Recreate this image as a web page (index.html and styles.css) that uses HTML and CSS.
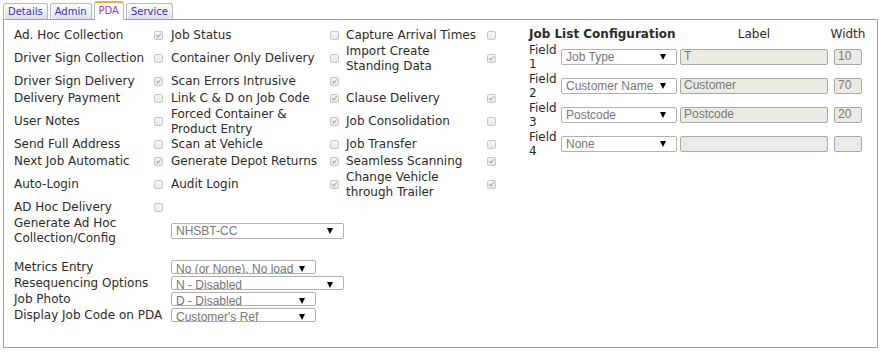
FILE: index.html
```html
<!DOCTYPE html>
<html lang="en">
<head>
    <meta charset="UTF-8">
    <title>PDA Settings</title>
    <link rel="stylesheet" href="styles.css">
</head>
<body>
    <div class="tabs">
        <a class="tab">Details</a>
        <a class="tab">Admin</a>
        <a class="tab active">PDA</a>
        <a class="tab">Service</a>
    </div>
    <div class="panel">
        <div class="left">
            <div class="opts">
                <span class="lbl">Ad. Hoc Collection</span><span class="cb on"></span>
                <span class="lbl">Job Status</span><span class="cb"></span>
                <span class="lbl">Capture Arrival Times</span><span class="cb"></span>

                <span class="lbl">Driver Sign Collection</span><span class="cb"></span>
                <span class="lbl">Container Only Delivery</span><span class="cb"></span>
                <span class="lbl">Import Create<br>Standing Data</span><span class="cb on"></span>

                <span class="lbl">Driver Sign Delivery</span><span class="cb on"></span>
                <span class="lbl">Scan Errors Intrusive</span><span class="cb on"></span>
                <span></span><span></span>

                <span class="lbl">Delivery Payment</span><span class="cb"></span>
                <span class="lbl">Link C &amp; D on Job Code</span><span class="cb on"></span>
                <span class="lbl">Clause Delivery</span><span class="cb on"></span>

                <span class="lbl">User Notes</span><span class="cb"></span>
                <span class="lbl">Forced Container &amp;<br>Product Entry</span><span class="cb on"></span>
                <span class="lbl">Job Consolidation</span><span class="cb"></span>

                <span class="lbl">Send Full Address</span><span class="cb"></span>
                <span class="lbl">Scan at Vehicle</span><span class="cb"></span>
                <span class="lbl">Job Transfer</span><span class="cb"></span>

                <span class="lbl">Next Job Automatic</span><span class="cb on"></span>
                <span class="lbl">Generate Depot Returns</span><span class="cb on"></span>
                <span class="lbl">Seamless Scanning</span><span class="cb on"></span>

                <span class="lbl">Auto-Login</span><span class="cb"></span>
                <span class="lbl">Audit Login</span><span class="cb on"></span>
                <span class="lbl">Change Vehicle<br>through Trailer</span><span class="cb on"></span>

                <span class="lbl">AD Hoc Delivery</span><span class="cb"></span>
                <span></span><span></span><span></span><span></span>

                <span class="lbl">Generate Ad Hoc<br>Collection/Config</span><span></span>
                <div class="sel wide"><span>NHSBT-CC</span><i class="arrow"></i></div>
            </div>

            <div class="extras">
                <span class="lbl">Metrics Entry</span>
                <div class="sel small"><span>No (or None), No load</span><i class="arrow"></i></div>
                <span class="lbl">Resequencing Options</span>
                <div class="sel small long"><span>N - Disabled</span><i class="arrow"></i></div>
                <span class="lbl">Job Photo</span>
                <div class="sel small"><span>D - Disabled</span><i class="arrow"></i></div>
                <span class="lbl">Display Job Code on PDA</span>
                <div class="sel small"><span>Customer's Ref</span><i class="arrow"></i></div>
            </div>
        </div>

        <div class="joblist">
            <span class="title">Job List Configuration</span>
            <span class="head">Label</span>
            <span class="head narrow">Width</span>

            <span class="field">Field 1</span>
            <div class="sel"><span>Job Type</span><i class="arrow"></i></div>
            <div class="txt">T</div>
            <div class="txt num">10</div>

            <span class="field">Field 2</span>
            <div class="sel"><span>Customer Name</span><i class="arrow"></i></div>
            <div class="txt">Customer</div>
            <div class="txt num">70</div>

            <span class="field">Field 3</span>
            <div class="sel"><span>Postcode</span><i class="arrow"></i></div>
            <div class="txt">Postcode</div>
            <div class="txt num">20</div>

            <span class="field">Field 4</span>
            <div class="sel"><span>None</span><i class="arrow"></i></div>
            <div class="txt"></div>
            <div class="txt num"></div>
        </div>
    </div>
</body>
</html>
```

FILE: styles.css
```css
body {
    margin: 0;
    font-family: "DejaVu Sans", Verdana, sans-serif;
    font-size: 12px;
    color: #2b2b2b;
    background: #fff;
}
.tabs {
    display: flex;
    align-items: flex-end;
    gap: 2px;
    height: 19px;
    padding-left: 3px;
    position: relative;
    z-index: 1;
}
.tab {
    box-sizing: border-box;
    height: 16px;
    padding: 0 4px;
    border: 1px solid #b4b8c4;
    border-bottom: none;
    border-radius: 3px 3px 0 0;
    background: linear-gradient(#ffffff, #dde0e8);
    box-shadow: inset 1px 1px 0 #fff;
    font-size: 10px;
    line-height: 15px;
    color: #3333cc;
}
.tab.active {
    height: 19px;
    margin-bottom: -1px;
    border-color: #a8c0dc;
    border-top: 2px solid #f5a93c;
    background: #fff;
    color: #9933cc;
}
.panel {
    box-sizing: border-box;
    display: flex;
    width: 875px;
    height: 329px;
    margin-left: 3px;
    padding: 7px 10px 0 10px;
    border: 1px solid #a0a0a0;
}
.left {
    width: 515px;
}
.opts {
    display: grid;
    grid-template-columns: 140px 17px 159px 16px 141px 13px;
    grid-auto-rows: minmax(17px, auto);
    align-items: center;
}
.lbl {
    line-height: 14.5px;
    white-space: nowrap;
}
.cb {
    box-sizing: border-box;
    position: relative;
    width: 9px;
    height: 9px;
    border: 1px solid #c8c8c8;
    border-radius: 2px;
    background: linear-gradient(#f6f6f6, #e8e8e8);
}
.cb.on::after {
    content: "";
    position: absolute;
    left: 2px;
    top: 0;
    width: 2px;
    height: 4px;
    border: solid #a6a6a6;
    border-width: 0 1.5px 1.5px 0;
    transform: rotate(40deg);
}
.sel {
    box-sizing: border-box;
    display: flex;
    align-items: center;
    justify-content: space-between;
    width: 116px;
    height: 16px;
    padding: 1px 10px 0 4px;
    border: 1px solid #b0b0b0;
    border-radius: 2px;
    background: #fff;
    font-family: "Liberation Sans", Arial, sans-serif;
    font-size: 12px;
    color: #777;
    white-space: nowrap;
}
.arrow {
    width: 0;
    height: 0;
    border-left: 3px solid transparent;
    border-right: 3px solid transparent;
    border-top: 6px solid #000;
}
.sel.wide {
    grid-column: 3 / 6;
    width: 173px;
}
.extras {
    display: grid;
    grid-template-columns: 157px auto;
    grid-auto-rows: 16px;
    align-items: center;
    margin-top: 14px;
}
.sel.small {
    width: 145px;
    height: 14px;
    padding-top: 3px;
    overflow: hidden;
}
.sel.small.long {
    width: 173px;
}
.joblist {
    display: grid;
    grid-template-columns: 32px 119px 154px 28px;
    grid-template-rows: 16px repeat(4, 29px);
    align-items: center;
    align-content: start;
    margin-top: -1px;
}
.title {
    grid-column: 1 / 3;
    font-weight: bold;
    white-space: nowrap;
}
.head {
    display: flex;
    justify-content: center;
    width: 148px;
}
.head.narrow {
    width: 28px;
}
.field {
    line-height: 14px;
}
.txt {
    box-sizing: border-box;
    width: 148px;
    height: 16px;
    padding: 0 3px;
    border: 1px solid #a8a8a8;
    border-radius: 2px;
    background: #ebebe4;
    font-family: "Liberation Sans", Arial, sans-serif;
    font-size: 12px;
    line-height: 13px;
    color: #777;
}
.txt.num {
    width: 28px;
}
```
